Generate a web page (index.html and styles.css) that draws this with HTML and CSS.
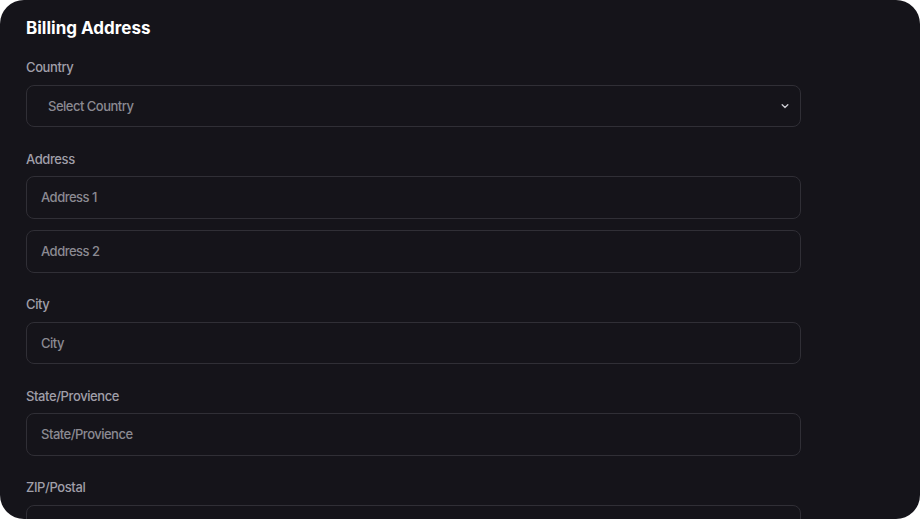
FILE: index.html
```html
<!DOCTYPE html>
<html>
<head>
<meta charset="utf-8">
<link rel="stylesheet" href="styles.css">
</head>
<body>
<div class="card">
  <h2 class="title">Billing Address</h2>
  <div class="field">
    <label class="label">Country</label>
    <div class="select">
      <span class="select-text">Select Country</span>
      <svg class="chev" width="10" height="10" viewBox="0 0 10 10"><path d="M2.2 3.8 L5 6.4 L7.8 3.8" fill="none" stroke="#c9c9d0" stroke-width="1.4" stroke-linecap="round" stroke-linejoin="round"/></svg>
    </div>
  </div>
  <div class="field">
    <label class="label">Address</label>
    <div class="stack">
      <div class="input">Address 1</div>
      <div class="input">Address 2</div>
    </div>
  </div>
  <div class="field">
    <label class="label">City</label>
    <div class="input">City</div>
  </div>
  <div class="field">
    <label class="label">State/Provience</label>
    <div class="input">State/Provience</div>
  </div>
  <div class="field">
    <label class="label">ZIP/Postal</label>
    <div class="input">ZIP/Postal</div>
  </div>
</div>
</body>
</html>
```

FILE: styles.css
```css
html, body {
  margin: 0;
  padding: 0;
  background: #ffffff;
}
body {
  width: 920px;
  height: 519px;
  overflow: hidden;
  font-family: Inter, "Liberation Sans", sans-serif;
}
.card {
  width: 920px;
  height: 519px;
  box-sizing: border-box;
  background: #15141a;
  border-radius: 24px;
  overflow: hidden;
  padding: 16px 26px 0 26px;
  display: flex;
  flex-direction: column;
  gap: 23.5px;
}
.title {
  margin: 0 0 -4.5px 0;
  font-size: 17px;
  line-height: 24px;
  font-weight: 700;
  color: #ffffff;
}
.field {
  display: flex;
  flex-direction: column;
  gap: 9.5px;
  width: 775px;
  flex-shrink: 0;
}
.label {
  font-size: 13px;
  line-height: 16px;
  font-weight: 500;
  letter-spacing: -0.4px;
  color: #a09fa9;
}
.stack {
  display: flex;
  flex-direction: column;
  gap: 11.5px;
}
.input, .select {
  height: 42.5px;
  box-sizing: border-box;
  border: 1px solid #302f36;
  border-radius: 8px;
  display: flex;
  align-items: center;
  padding: 0 14px;
  font-size: 13px;
  font-weight: 500;
  letter-spacing: -0.5px;
  color: #8b8a92;
  flex-shrink: 0;
}
.select {
  padding: 0 10px 0 21px;
  justify-content: space-between;
}
.chev {
  display: block;
}
```
